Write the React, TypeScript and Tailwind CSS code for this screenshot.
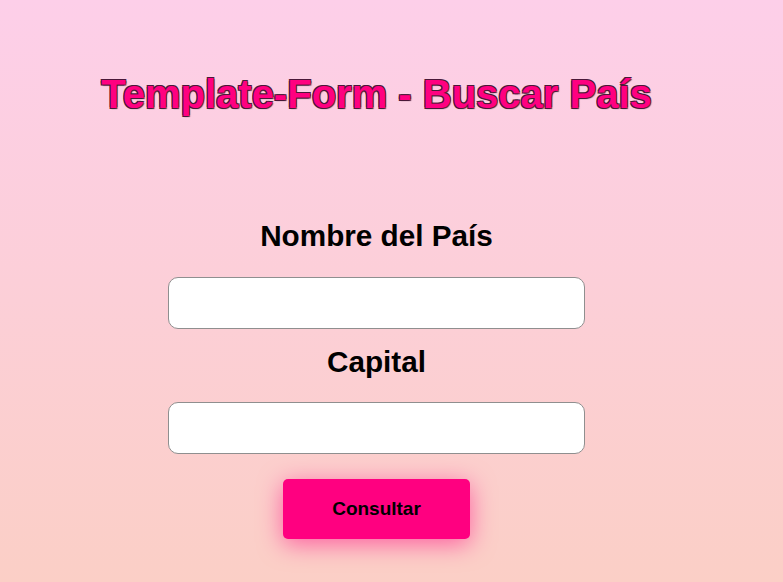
import React from 'react';

const App: React.FC = () => {
  return (
    <div className="min-h-[582px] w-full bg-[linear-gradient(180deg,#fdcfe9_0%,#fbcfc6_100%)] font-['Liberation_Sans',Arial,sans-serif]">
      <div className="w-[753px] flex flex-col items-center pt-[71px]">
        <h1 className="text-[40px] leading-[46px] font-bold text-[#ff0080] [text-shadow:1px_1px_1px_#4a1838,-1px_-1px_0_#4a1838,1px_-1px_0_#4a1838,-1px_1px_0_#4a1838]">
          Template-Form - Buscar País
        </h1>

        <form className="flex flex-col items-center mt-[102px]" onSubmit={(e) => e.preventDefault()}>
          <label htmlFor="pais" className="text-[29.7px] leading-[33px] font-bold text-black">
            Nombre del País
          </label>
          <input
            id="pais"
            type="text"
            className="mt-[25px] w-[417px] h-[52px] bg-white border border-[#8f8f8f] rounded-[10px] px-3 outline-none"
          />

          <label htmlFor="capital" className="mt-[16px] text-[29.7px] leading-[33px] font-bold text-black">
            Capital
          </label>
          <input
            id="capital"
            type="text"
            className="mt-[24px] w-[417px] h-[52px] bg-white border border-[#8f8f8f] rounded-[10px] px-3 outline-none"
          />

          <button
            type="submit"
            className="mt-[25px] w-[187px] h-[60px] bg-[#ff0080] rounded-[5px] text-[19px] font-bold text-black shadow-[0_5px_24px_rgba(255,0,128,0.55)]"
          >
            Consultar
          </button>
        </form>
      </div>
    </div>
  );
};

export default App;
